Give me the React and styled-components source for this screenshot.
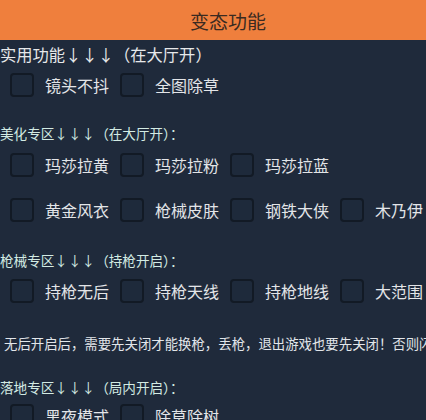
import React from 'react';
import styled, {createGlobalStyle} from 'styled-components';

const GlobalStyle = createGlobalStyle`
  html, body {
    margin: 0;
    padding: 0;
    background: #1f2a3b;
    overflow: hidden;
  }
  body {
    font-family: "Noto Sans CJK SC", "Noto Sans", sans-serif;
  }
`;

const Panel = styled.div`
  width: 456px;
  height: 420px;
  background: #1f2a3b;
  display: flex;
  flex-direction: column;
`;

const Header = styled.div`
  height: 40px;
  flex-shrink: 0;
  background: #ef7f3d;
  color: #3a2a21;
  font-size: 19px;
  display: flex;
  align-items: center;
  justify-content: center;
`;

const Title = styled.div`
  color: ${p => p.$big ? '#e6e8ea' : '#d3ebe3'};
  font-size: ${p => p.$big ? '16.3px' : '13.6px'};
  line-height: ${p => p.$big ? '28px' : '20px'};
  margin-top: ${p => p.$top || 0}px;
  white-space: nowrap;
`;

const Note = styled.div`
  color: #e2e6ea;
  font-size: 13.4px;
  line-height: 20px;
  margin-top: ${p => p.$top || 0}px;
  padding-left: 4px;
  white-space: nowrap;
`;

const Row = styled.div`
  display: flex;
  height: 24px;
  margin-top: ${p => p.$top || 0}px;
`;

const Item = styled.label`
  width: 110px;
  padding-left: 10px;
  box-sizing: border-box;
  display: flex;
  align-items: center;
  gap: 11px;
  flex-shrink: 0;
  color: #e3e5e8;
  font-size: 16px;
  white-space: nowrap;
`;

const Box = styled.span`
  width: 24px;
  height: 24px;
  box-sizing: border-box;
  border: 2px solid #121a25;
  border-radius: 4px;
  background: #1e2a3b;
  flex-shrink: 0;
`;

const Options = ({items, top}) => (
  <Row $top={top}>
    {items.map(name => (
      <Item key={name}>
        <Box />
        {name}
      </Item>
    ))}
  </Row>
);

const App = () => (
  <>
    <GlobalStyle />
    <Panel>
      <Header>变态功能</Header>
      <Title $big>实用功能↓↓↓（在大厅开）</Title>
      <Options top={5} items={['镜头不抖', '全图除草']} />

      <Title $top={26}>美化专区↓↓↓（在大厅开）：</Title>
      <Options top={10} items={['玛莎拉黄', '玛莎拉粉', '玛莎拉蓝']} />
      <Options top={21} items={['黄金风衣', '枪械皮肤', '钢铁大侠', '木乃伊']} />

      <Title $top={28}>枪械专区↓↓↓（持枪开启）：</Title>
      <Options top={9} items={['持枪无后', '持枪天线', '持枪地线', '大范围']} />

      <Note $top={30}>无后开启后，需要先关闭才能换枪，丢枪，退出游戏也要先关闭！否则闪退</Note>

      <Title $top={24}>落地专区↓↓↓（局内开启）：</Title>
      <Options top={7} items={['黑夜模式', '除草除树']} />
    </Panel>
  </>
);

export default App;
